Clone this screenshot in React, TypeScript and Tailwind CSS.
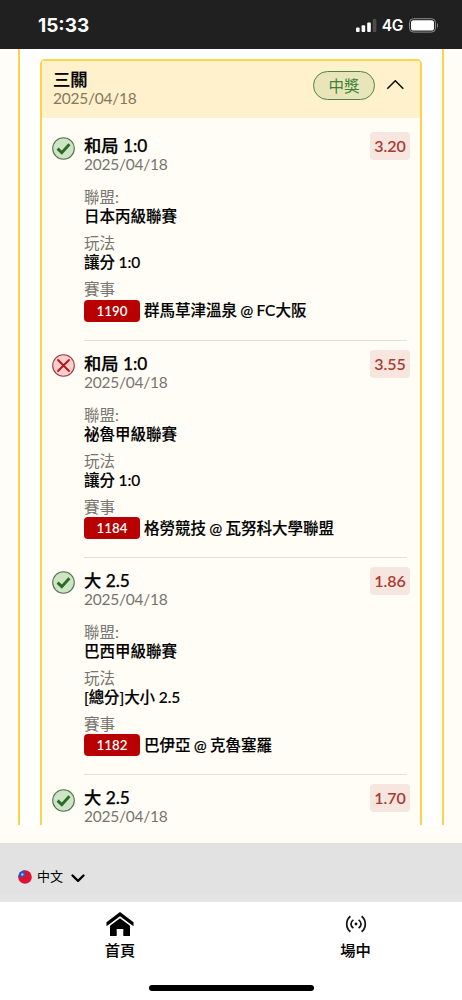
import React from 'react';

interface Leg {
  id: number;
  won: boolean;
  pick: string;
  date: string;
  odds: string;
  league?: string;
  play?: string;
  code?: string;
  match?: string;
}

const legs: Leg[] = [
  { id: 1, won: true, pick: '和局 1:0', date: '2025/04/18', odds: '3.20', league: '日本丙級聯賽', play: '讓分 1:0', code: '1190', match: '群馬草津溫泉 @ FC大阪' },
  { id: 2, won: false, pick: '和局 1:0', date: '2025/04/18', odds: '3.55', league: '祕魯甲級聯賽', play: '讓分 1:0', code: '1184', match: '格勞競技 @ 瓦努科大學聯盟' },
  { id: 3, won: true, pick: '大 2.5', date: '2025/04/18', odds: '1.86', league: '巴西甲級聯賽', play: '[總分]大小 2.5', code: '1182', match: '巴伊亞 @ 克魯塞羅' },
  { id: 4, won: true, pick: '大 2.5', date: '2025/04/18', odds: '1.70' },
];

const StatusBar: React.FC = () => (
  <header className="flex h-[49px] shrink-0 items-start justify-between bg-[#202020] pr-[23px] pl-[38px] text-white">
    <span className="mt-[14px] font-[Inter,sans-serif] text-[19px] leading-[23px] font-bold">15:33</span>
    <div className="mt-[17px] flex h-[16px] items-center">
      <svg width="21" height="13" viewBox="0 0 21 13" fill="currentColor">
        <rect x="0" y="8.5" width="3.6" height="4.5" rx="1" />
        <rect x="5.6" y="6.3" width="3.6" height="6.7" rx="1" />
        <rect x="11.2" y="3.4" width="3.6" height="9.6" rx="1" />
        <rect x="16.8" y="0" width="3.6" height="13" rx="1" opacity="0.2" />
      </svg>
      <span className="mt-[2px] ml-[5px] font-[Inter,sans-serif] text-[15.5px] leading-[16px] font-semibold tracking-[-0.4px]">4G</span>
      <svg className="ml-[6px]" width="30" height="15" viewBox="0 0 30 15" fill="none">
        <rect x="0.5" y="0.7" width="26" height="13.4" rx="4" stroke="#8c8c8c" />
        <rect x="2" y="2.2" width="23" height="10.4" rx="2.6" fill="#fff" />
        <path d="M28 5.2c1.3.5 1.3 4 0 4.5z" fill="#8c8c8c" />
      </svg>
    </div>
  </header>
);

const ResultIcon: React.FC<{ won: boolean }> = ({ won }) => (
  <svg className="mt-[13.5px] shrink-0" width="23" height="23" viewBox="0 0 23 23" fill="none">
    {won ? (
      <>
        <circle cx="11.5" cy="11.5" r="10.8" fill="#cde5c4" stroke="#55734f" strokeWidth="1.1" />
        <path d="M5.6 11.6l4.2 4 7.6-8.4" stroke="#2c6b25" strokeWidth="2.9" />
      </>
    ) : (
      <>
        <circle cx="11.5" cy="11.5" r="10.8" fill="#fbcfcb" stroke="#a63a3e" strokeWidth="1.1" />
        <path d="M6 6l11 11M17 6L6 17" stroke="#b8121d" strokeWidth="1.8" strokeLinecap="round" />
      </>
    )}
  </svg>
);

const LegItem: React.FC<{ leg: Leg }> = ({ leg }) => (
  <li className="flex h-[217.45px] pl-[10px]">
    <ResultIcon won={leg.won} />
    <div className="ml-[9px] w-[323px] border-b border-[#e3e2d9] pt-[14px]">
      <div className="flex justify-between">
        <div>
          <p className="text-[17.3px] leading-[18px] font-medium [-webkit-text-stroke:0.25px]">{leg.pick}</p>
          <p className="text-[15.5px] leading-[18px] tracking-[-0.25px] text-[#777570]">{leg.date}</p>
        </div>
        <span className="-mt-[5px] -mr-[3px] h-[28px] w-[40px] rounded-[4px] bg-[#f7e5df] text-center text-[16px] leading-[28px] font-semibold text-[#a93b31]">
          {leg.odds}
        </span>
      </div>
      {leg.league && (
        <dl className="text-[15.5px]">
          <dt className="mt-[15px] leading-[18px] text-[#777570]">聯盟:</dt>
          <dd className="mt-px leading-[19px] font-medium [-webkit-text-stroke:0.15px]">{leg.league}</dd>
          <dt className="mt-[8px] leading-[18px] text-[#777570]">玩法</dt>
          <dd className="mt-px leading-[19px] font-medium tracking-[-0.1px] [-webkit-text-stroke:0.15px]">{leg.play}</dd>
          <dt className="mt-[8px] leading-[18px] text-[#777570]">賽事</dt>
          <dd className="mt-px flex items-center gap-[4px] leading-[23px] font-medium whitespace-nowrap">
            <span className="h-[22px] w-[56px] rounded-[4px] bg-[#b90000] text-center text-[13.3px] leading-[22px] font-semibold text-white">{leg.code}</span>
            <span className="[word-spacing:-0.7px] [-webkit-text-stroke:0.15px]">{leg.match}</span>
          </dd>
        </dl>
      )}
    </div>
  </li>
);

const Ticket: React.FC = () => (
  <section className="mt-[10px] ml-[20px] w-[382px] shrink-0 rounded-t-[5px] border-2 border-[#fad54c] bg-[#fffdf5]">
    <div className="flex h-[57px] items-start justify-between bg-[#fff1cb] pl-[11px]">
      <div className="pt-[10px]">
        <h2 className="text-[17.3px] leading-[18px] font-medium [-webkit-text-stroke:0.25px]">三關</h2>
        <p className="text-[15.5px] leading-[18px] tracking-[-0.25px] text-[#84795c]">2025/04/18</p>
      </div>
      <div className="mt-[10px] mr-[15px] flex items-center">
        <span className="h-[29px] w-[62px] rounded-full border border-[#56804a] bg-[#e8e6b8] text-center text-[15.5px] leading-[28px] text-[#3d8038]">中獎</span>
        <svg className="ml-[11px]" width="19" height="12" viewBox="0 0 19 12" fill="none">
          <path d="M1.3 8.8l8-8 8 8" stroke="#111" strokeWidth="1.6" />
        </svg>
      </div>
    </div>
    <ul className="pt-[5.1px]">
      {legs.map((leg) => (
        <LegItem key={leg.id} leg={leg} />
      ))}
    </ul>
  </section>
);

const Footer: React.FC = () => (
  <footer className="flex h-[59px] shrink-0 items-start bg-linear-to-b from-[#e2e2e2] from-85% to-[#e8e8e8] pt-[23px] pl-[18px]">
    <svg className="mt-[4px]" width="14" height="14" viewBox="0 0 14 14">
      <circle cx="7" cy="7" r="6.8" fill="#df1235" />
      <path d="M7 .2A6.8 6.8 0 0 0 .2 7H7z" fill="#2457b8" />
      <circle cx="4.3" cy="4.5" r="1.2" fill="#a9c9f3" />
    </svg>
    <span className="ml-[5px] text-[13px] leading-[20px]">中文</span>
    <svg className="mt-[8px] ml-[8px]" width="14" height="9" viewBox="0 0 14 9" fill="none">
      <path d="M1.5 1.5l5.5 5.3 5.5-5.3" stroke="#000" strokeWidth="2.3" strokeLinecap="round" strokeLinejoin="round" />
    </svg>
  </footer>
);

const BottomNav: React.FC = () => (
  <nav className="flex h-[98px] shrink-0 flex-col items-center bg-white">
    <div className="flex h-[83px] w-full text-[15.3px] font-medium [-webkit-text-stroke:0.1px]">
      <a className="flex w-[240px] flex-col items-center pt-[9px]">
        <svg width="28" height="27" viewBox="0 0 28 27">
          <path d="M.5 11.2L14 1l13.5 10.2v4L14 5.2.5 15.2z" />
          <path d="M4 14.8L14 7.3l10 7.5V25h-6.7v-7h-6.6v7H4z" />
        </svg>
        <span className="mt-[1px] leading-[23px]">首頁</span>
      </a>
      <a className="flex w-[222px] flex-col items-center pt-[13px] pl-[9px]">
        <svg width="22" height="18" viewBox="0 0 22 18" fill="none" stroke="#111" strokeWidth="1.7">
          <path d="M5.4 1.2c-4.9 3.7-4.9 11.9 0 15.6M16.6 1.2c4.9 3.7 4.9 11.9 0 15.6" />
          <path d="M8.4 4.9c-3.3 2.2-3.3 6 0 8.2M13.6 4.9c3.3 2.2 3.3 6 0 8.2" />
          <circle cx="11" cy="9" r="1.4" fill="#111" stroke="none" />
        </svg>
        <span className="mt-[6px] leading-[23px]">場中</span>
      </a>
    </div>
    <div className="h-[6px] w-[165px] rounded-full bg-black" />
  </nav>
);

const App: React.FC = () => (
  <div className="flex h-[1000px] w-[462px] flex-col overflow-hidden bg-[#fffdf5] font-[Lato,'Noto_Sans_CJK_TC',sans-serif] text-black">
    <StatusBar />
    <main className="h-[794px] shrink-0">
      <div className="ml-[18px] flex h-[776px] w-[426px] items-start overflow-hidden border-x-2 border-[#fad54c] bg-white">
        <Ticket />
      </div>
    </main>
    <Footer />
    <BottomNav />
  </div>
);

export default App;
